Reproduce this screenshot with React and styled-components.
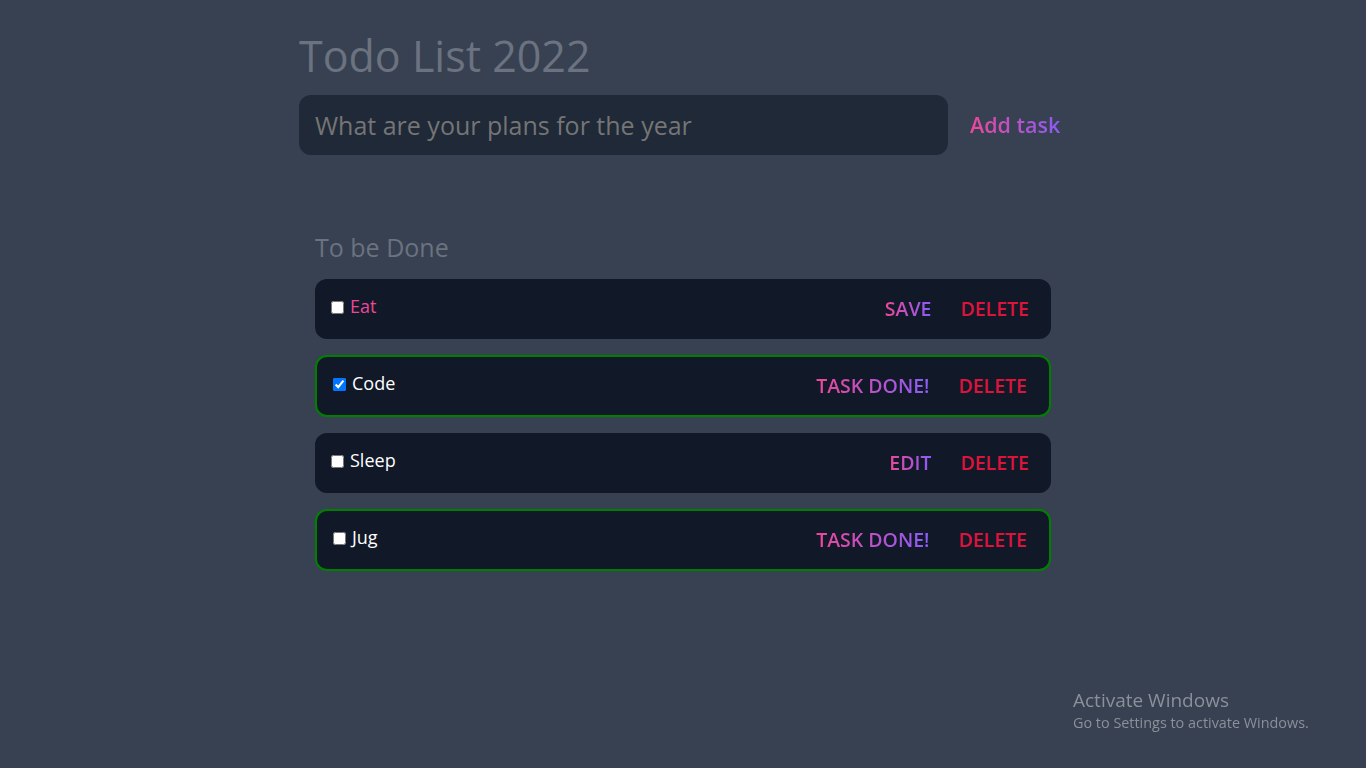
import React from 'react';
import styled, { createGlobalStyle, css } from 'styled-components';

const GlobalStyle = createGlobalStyle`
  html, body {
    margin: 0;
    padding: 0;
    background-color: #374151;
    font-family: "Open Sans", "Noto Sans", sans-serif;
  }
  * { box-sizing: border-box; }
`;

const tasks = [
  { id: 1, name: 'Eat', editing: true, done: false, checked: false },
  { id: 2, name: 'Code', editing: false, done: true, checked: true },
  { id: 3, name: 'Sleep', editing: false, done: false, checked: false },
  { id: 4, name: 'Jug', editing: false, done: true, checked: false },
];

const App = () => {
  return (
    <Page>
      <GlobalStyle />
      <Container>
        <Title>Todo List 2022</Title>
        <Form>
          <TaskInput placeholder="What are your plans for the year" />
          <AddButton>Add task</AddButton>
        </Form>

        <Section>
          <SectionTitle>To be Done</SectionTitle>
          <List>
            {tasks.map((t) => (
              <Row key={t.id} done={t.done}>
                <Label>
                  <input type="checkbox" defaultChecked={t.checked} />
                  <TaskName editing={t.editing}>{t.name}</TaskName>
                </Label>
                <Actions>
                  <ActionButton>
                    {t.editing ? 'SAVE' : t.done ? 'TASK DONE!' : 'EDIT'}
                  </ActionButton>
                  <DeleteButton>DELETE</DeleteButton>
                </Actions>
              </Row>
            ))}
          </List>
        </Section>
      </Container>

      <Watermark>
        <WatermarkTitle>Activate Windows</WatermarkTitle>
        <WatermarkText>Go to Settings to activate Windows.</WatermarkText>
      </Watermark>
    </Page>
  );
};

const gradientText = css`
  background: linear-gradient(to right, #ec4899, #8b5cf6);
  -webkit-background-clip: text;
  background-clip: text;
  color: transparent;
`;

const Page = styled.div`
  min-height: 100vh;
  background-color: #374151;
`;

const Container = styled.main`
  width: 768px;
  margin: 0 auto;
  padding-top: 27px;
`;

const Title = styled.h1`
  margin: 0;
  font-size: 43px;
  font-weight: 400;
  line-height: 58px;
  color: #6b7280;
`;

const Form = styled.form`
  display: flex;
  align-items: center;
  margin-top: 10px;
`;

const TaskInput = styled.input`
  width: 649px;
  height: 60px;
  padding: 0 16px;
  border: none;
  border-radius: 12px;
  background-color: #1f2937;
  font-family: inherit;
  font-size: 25px;
  color: #d1d5db;
  outline: none;

  ::placeholder {
    color: #6b7280;
  }
`;

const AddButton = styled.button`
  margin-left: 22px;
  margin-top: -2px;
  padding: 0;
  border: none;
  background: none;
  font-family: inherit;
  font-size: 21.5px;
  font-weight: 600;
  ${gradientText}
  cursor: pointer;
`;

const Section = styled.section`
  padding: 0 16px;
  margin-top: 75px;
`;

const SectionTitle = styled.h2`
  margin: 0;
  font-size: 25px;
  font-weight: 400;
  line-height: 34px;
  color: #6b7280;
`;

const List = styled.ul`
  list-style: none;
  margin: 15px 0 0;
  padding: 0;
  display: flex;
  flex-direction: column;
  gap: 16px;
`;

const Row = styled.li`
  display: flex;
  align-items: center;
  justify-content: space-between;
  height: ${(p) => (p.done ? '62.5px' : '59.5px')};
  padding: 0 22px 0 16px;
  border-radius: 12px;
  background-color: #111827;
  border: ${(p) => (p.done ? '2px solid #008000' : 'none')};
`;

const Label = styled.label`
  display: flex;
  align-items: center;
  gap: 6px;
  margin-top: -5px;

  input {
    width: 13px;
    height: 13px;
    margin: 3px 0 0;
  }
`;

const TaskName = styled.span`
  font-size: 18px;
  color: ${(p) => (p.editing ? '#ec4899' : '#ffffff')};
`;

const Actions = styled.div`
  display: flex;
  align-items: center;
  gap: 29px;
`;

const buttonText = css`
  padding: 0;
  border: none;
  background: none;
  font-family: inherit;
  font-size: 19.5px;
  font-weight: 600;
`;

const ActionButton = styled.button`
  ${buttonText}
  ${gradientText}
`;

const DeleteButton = styled.button`
  ${buttonText}
  color: #dc143c;
`;

const Watermark = styled.div`
  position: fixed;
  left: 1073px;
  top: 687px;
  color: #8b909a;
  font-family: "Open Sans", "Noto Sans", sans-serif;
`;

const WatermarkTitle = styled.div`
  font-size: 19px;
  line-height: 26px;
`;

const WatermarkText = styled.div`
  font-size: 14.4px;
  line-height: 19px;
`;

export default App;
